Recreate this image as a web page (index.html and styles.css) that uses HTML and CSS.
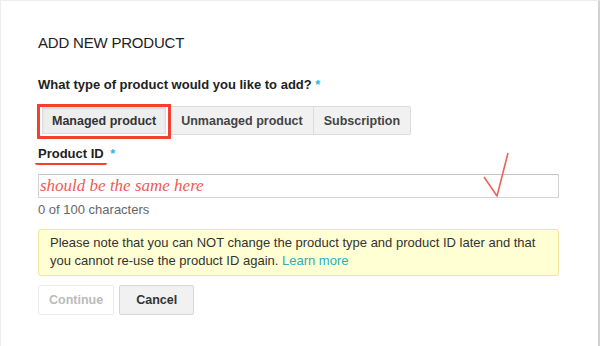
FILE: index.html
```html
<!DOCTYPE html>
<html lang="en">
<head>
    <meta charset="UTF-8">
    <meta name="viewport" content="width=device-width, initial-scale=1.0">
    <title>Add New Product</title>
    <link rel="stylesheet" href="styles.css">
</head>
<body>
    <div class="dialog">
        <h1>ADD NEW PRODUCT</h1>

        <div class="question">What type of product would you like to add? <span class="req">*</span></div>

        <div class="type-group">
            <span class="mark-box">
                <button type="button" class="type-btn selected">Managed product</button>
            </span>
            <button type="button" class="type-btn">Unmanaged product</button>
            <button type="button" class="type-btn last">Subscription</button>
        </div>

        <div class="field-label">
            <span class="mark-line">Product ID</span> <span class="req">*</span>
        </div>

        <div class="text-field">
            <span class="scribble">should be the same here</span>
            <svg class="tick" width="30" height="50" viewBox="0 0 30 50">
                <polyline points="2,28 15,47 26,4" fill="none" stroke="#f0625a" stroke-width="1.6" stroke-linejoin="round"/>
            </svg>
        </div>
        <div class="counter">0 of 100 characters</div>

        <div class="notice">
            Please note that you can NOT change the product type and product ID later and that
            you cannot re-use the product ID again. <a href="#">Learn more</a>
        </div>

        <div class="actions">
            <button type="button" class="btn disabled">Continue</button>
            <button type="button" class="btn cancel">Cancel</button>
        </div>
    </div>
</body>
</html>
```

FILE: styles.css
```css
body {
    margin: 0;
    background-color: #fff;
    font-family: 'Liberation Sans', Arial, sans-serif;
    color: #222;
}
.dialog {
    box-sizing: border-box;
    width: 600px;
    height: 346px;
    padding: 32px 0 0 37px;
    border-top: 1px solid #eee;
    border-left: 1px solid #eee;
    border-right: 2px solid #d2d2d2;
}
h1 {
    margin: 0;
    font-size: 15px;
    line-height: 20px;
    font-weight: normal;
    letter-spacing: -0.2px;
    color: #222;
}
.question {
    margin-top: 24px;
    font-size: 13px;
    line-height: 16px;
    font-weight: bold;
}
.req {
    color: #33b5e5;
    font-weight: bold;
}
.type-group {
    display: flex;
    align-items: flex-start;
    margin-top: 11px;
}
.mark-box {
    display: block;
    margin-left: -1px;
    padding: 0 2px 2px 2px;
    border: 3px solid #f2412f;
}
.type-btn {
    height: 29px;
    margin-top: 2px;
    padding: 0 10px;
    border: 1px solid #dcdcdc;
    border-left: none;
    background-color: #f1f1f1;
    font-family: inherit;
    font-size: 12.5px;
    font-weight: bold;
    color: #444;
}
.type-btn.selected {
    height: 27px;
    margin-top: 0;
    padding: 0 9px;
    border-left: 1px solid #dcdcdc;
    background-color: #eee;
    box-shadow: inset 0 1px 2px rgba(0, 0, 0, 0.1);
    color: #333;
}
.type-btn.last {
    border-radius: 0 2px 2px 0;
}
.field-label {
    margin-top: 7px;
    font-size: 13px;
    line-height: 16px;
    font-weight: bold;
}
.mark-line {
    display: inline-block;
    margin-left: -3px;
    padding: 0 3px 1px 3px;
    border-bottom: 2px solid #f2412f;
    border-radius: 0 0 2px 2px;
}
.text-field {
    position: relative;
    box-sizing: border-box;
    width: 521px;
    height: 24px;
    margin-top: 9px;
    border: 1px solid #d4d4d4;
    border-top-color: #c4c4c4;
    border-radius: 1px;
}
.scribble {
    display: block;
    padding-left: 1px;
    font-family: 'Liberation Serif', 'Times New Roman', serif;
    font-style: italic;
    font-size: 17px;
    line-height: 22px;
    color: #f25a55;
}
.tick {
    position: absolute;
    left: 443px;
    top: -26px;
}
.counter {
    margin-top: 4px;
    font-size: 13px;
    line-height: 16px;
    color: #666;
}
.notice {
    box-sizing: border-box;
    width: 521px;
    margin-top: 11px;
    padding: 4px 11px 5px 11px;
    border: 1px solid #f3e49c;
    border-radius: 3px;
    background-color: #ffffd3;
    font-size: 13px;
    line-height: 18px;
    color: #333;
}
.notice a {
    color: #29aec6;
    text-decoration: none;
}
.actions {
    display: flex;
    gap: 5px;
    margin-top: 9px;
}
.btn {
    height: 30px;
    padding: 0 10px;
    border: 1px solid #d6d6d6;
    border-radius: 2px;
    background-color: #f1f1f1;
    font-family: inherit;
    font-size: 12.5px;
    font-weight: bold;
    color: #333;
}
.btn.cancel {
    padding: 0 16px;
}
.btn.disabled {
    border-color: #ececec;
    background-color: #fff;
    color: #bbb;
}
```
